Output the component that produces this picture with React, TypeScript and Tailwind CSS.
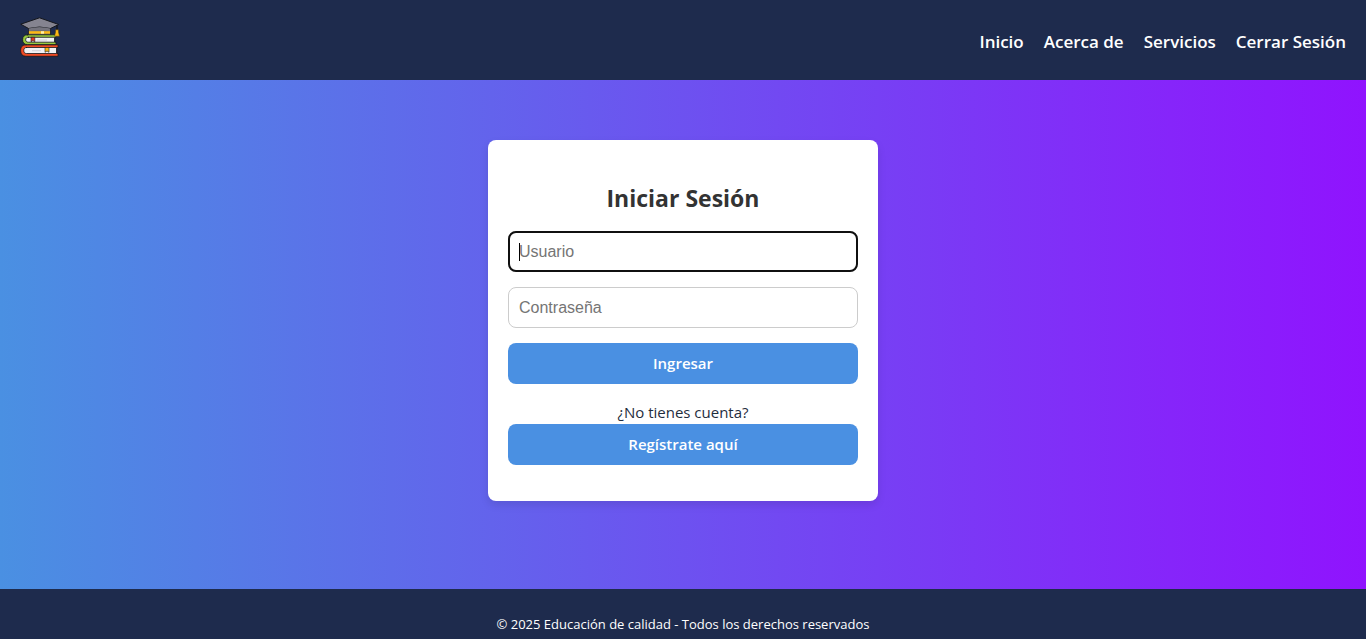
const navLinks = ['Inicio', 'Acerca de', 'Servicios', 'Cerrar Sesión'];

function Logo() {
  return (
    <svg viewBox="0 0 40 40" className="size-10" role="img" aria-label="Educación de calidad">
      <g stroke="#15171c" strokeWidth=".8" strokeLinejoin="round" strokeLinecap="round">
        <path d="M8.500 9v9.300h22V9Z" fill="#6d6c75" />
        <path d="M6 27.800h32v2.700h-1.200v6H38v2.800H6C2.300 39.300.6 37.200.6 33.600S2.300 27.800 6 27.800Z" fill="#f04a24" />
        <path d="M6.500 30.500h30v6h-30c-1.900 0-2.700-1.200-2.700-3s.8-3 2.700-3Z" fill="#f1f1f4" />
        <path d="M7.500 17.800H36v2.500h-1.200v4.900H36v2.400H7.500c-3.200 0-4.900-1.800-4.900-4.900s1.700-4.900 4.900-4.900Z" fill="#97c93d" />
        <path d="M8.500 20.300h26v4.900h-26c-1.900 0-2.800-.9-2.800-2.500s.9-2.400 2.800-2.400Z" fill="#f1f1f4" />
      </g>
      <path d="M8.900 14.200h21.200v2.500H8.900Z" fill="#fdb913" />
      <path d="M21 14.200h3v2.500h-3Z" fill="#fff0a8" />
      <path d="M.8 7.200 19.500.8 38.700 7.500 30.500 11.500Q19.500 8.500 8.500 11.500Z" fill="#858490" stroke="#15171c" strokeWidth="1" strokeLinejoin="round" />
      <path d="M8.900 11.500Q19.500 8.800 30.100 11.500v2.500Q19.500 12 8.900 14Z" fill="#75747e" />
      <path d="M37 8v5" stroke="#15171c" strokeWidth="1.500" />
      <path d="M35.500 12.800h3v2.400l1 4h-5l1-4Z" fill="#fdb913" stroke="#4a3a14" strokeWidth=".5" />
      <path d="M11 20.300h3.800v4.500l-1.900-1.200-1.900 1.200Z" fill="#e23b22" stroke="#15171c" strokeWidth=".6" />
      <path d="M25 30.500h4v4.800L27 34l-2 1.300Z" fill="#fdb913" stroke="#15171c" strokeWidth=".6" />
      <path d="M17 23h10M12 33.700h9" stroke="#c9c9d2" strokeWidth=".8" />
    </svg>
  );
}

const fieldClass =
  "peer h-[41px] w-full rounded-lg border border-[#ccc] bg-white px-2.5 font-['Liberation_Sans',Arial,sans-serif] text-base text-black placeholder:text-[#757575] focus:outline-2 focus:-outline-offset-2 focus:outline-[#101010]";

const buttonClass =
  'flex h-[41px] w-full cursor-pointer items-center justify-center rounded-lg bg-[#4a90e2] text-[15px] font-semibold text-white hover:bg-[#357abd]';

export default function App() {
  return (
    <div className="flex min-h-screen flex-col bg-[#1e2b4d] font-['Open_Sans','Noto_Sans',sans-serif]">
      <header className="flex h-20 items-center justify-between px-5">
        <a href="#inicio" className="-mt-1.5">
          <Logo />
        </a>
        <nav className="mt-1">
          <ul className="flex gap-5">
            {navLinks.map((label) => (
              <li key={label}>
                <a href="#" className="text-[17px] font-semibold text-white hover:underline">
                  {label}
                </a>
              </li>
            ))}
          </ul>
        </nav>
      </header>

      <main className="flex grow flex-col items-center bg-linear-to-r/srgb from-[#4a90e2] to-[#9013fe] px-5 py-15">
        <section className="w-full max-w-[390px] rounded-lg bg-white px-5 pt-10 pb-9 shadow-[0_4px_8px_rgba(0,0,0,0.1)]">
          <h1 className="mb-[15px] text-center text-[23px] leading-9 font-bold text-[#333]">Iniciar Sesión</h1>
          <form className="flex flex-col gap-[15px]" onSubmit={(event) => event.preventDefault()}>
            <div className="relative">
              <input
                type="text"
                name="usuario"
                aria-label="Usuario"
                placeholder="Usuario"
                autoFocus
                className={`${fieldClass} placeholder-shown:caret-transparent`}
              />
              {/* Caret shown while the focused field is still empty */}
              <span
                aria-hidden="true"
                className="pointer-events-none absolute top-3 left-[11px] hidden h-[18px] w-px bg-black peer-placeholder-shown:peer-focus:block"
              />
            </div>
            <input type="password" name="contrasena" aria-label="Contraseña" placeholder="Contraseña" className={fieldClass} />
            <button type="submit" className={buttonClass}>
              Ingresar
            </button>
          </form>
          <p className="mt-4 text-center text-[15px] leading-6 text-[#1f2d3d]">¿No tienes cuenta?</p>
          <a href="#registro" className={buttonClass}>
            Regístrate aquí
          </a>
        </section>
      </main>

      <footer className="flex h-[50px] items-end justify-center pb-1">
        <p className="text-[13px] leading-[22px] text-white">© 2025 Educación de calidad - Todos los derechos reservados</p>
      </footer>
    </div>
  );
}
